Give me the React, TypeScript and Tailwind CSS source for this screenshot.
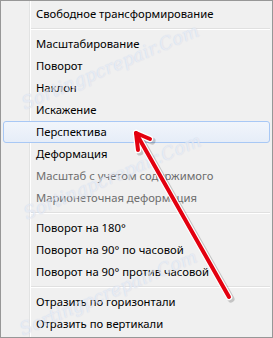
import React from 'react';

type Item = { label: string; disabled?: boolean; active?: boolean } | 'sep';

const ITEMS: Item[] = [
  { label: 'Свободное трансформирование' },
  'sep',
  { label: 'Масштабирование' },
  { label: 'Поворот' },
  { label: 'Наклон' },
  { label: 'Искажение' },
  { label: 'Перспектива', active: true },
  { label: 'Деформация' },
  { label: 'Масштаб с учетом содержимого', disabled: true },
  { label: 'Марионеточная деформация', disabled: true },
  'sep',
  { label: 'Поворот на 180°' },
  { label: 'Поворот на 90° по часовой' },
  { label: 'Поворот на 90° против часовой' },
  'sep',
  { label: 'Отразить по горизонтали' },
  { label: 'Отразить по вертикали' },
];

// faint watermark stamped over the screenshot
function Watermark({ className }: { className: string }) {
  return (
    <div
      className={`absolute pointer-events-none select-none italic text-[18px] text-white/60 [text-shadow:0_0_1px_#b9c6e2] [font-family:'DejaVu_Serif',serif] -rotate-[23deg] whitespace-nowrap opacity-80 ${className}`}
    >
      Sortingpcrepair.Com
    </div>
  );
}

function Arrow() {
  return (
    <svg className="absolute inset-0 pointer-events-none" width="273" height="338" viewBox="0 0 273 338">
      <g fill="none" strokeLinecap="round" strokeLinejoin="round">
        <g stroke="#000" strokeOpacity="0.18" strokeWidth="7" transform="translate(2 2)">
          <path d="M228 296 L135 132" />
          <path d="M149 138 L135 132 L137 149" />
        </g>
        <g stroke="#fff" strokeWidth="6.5">
          <path d="M228 296 L135 132" />
          <path d="M149 138 L135 132 L137 149" />
        </g>
        <g stroke="#e3000f" strokeWidth="4">
          <path d="M228 296 L135 132" />
          <path d="M149 138 L135 132 L137 149" />
        </g>
      </g>
    </svg>
  );
}

export default function App() {
  return (
    <div className="relative w-[273px] h-[338px] overflow-hidden border border-[#979797] bg-[#f0f0f0] text-[11.25px] [font-family:'Noto_Sans',sans-serif]">
      {/* gutter line */}
      <div className="absolute top-0 bottom-0 left-[28px] w-[2px] border-l border-[#e2e3e3] border-r border-r-white" />

      <div className="relative flex flex-col p-[2px]">
        {ITEMS.map((it, i) =>
          it === 'sep' ? (
            <div key={i} className="h-[8px] flex flex-col justify-center pl-[28px]">
              <div className="h-[1px] bg-[#e0e0e0]" />
              <div className="h-[1px] bg-white" />
            </div>
          ) : (
            <div
              key={i}
              className={`h-[22px] flex items-center pl-[32px] rounded-[3px] border ${
                it.active
                  ? 'border-[#a8c8f5] bg-[linear-gradient(#f1f5fb,#e6edf8)]'
                  : 'border-transparent'
              } ${it.disabled ? 'text-[#6d6d6d]' : 'text-black'}`}
            >
              {it.label}
            </div>
          )
        )}
      </div>

      <Watermark className="left-[14px] top-[52px]" />
      <Watermark className="left-[16px] top-[162px]" />
      <Watermark className="left-[12px] top-[278px]" />
      <Arrow />
    </div>
  );
}
